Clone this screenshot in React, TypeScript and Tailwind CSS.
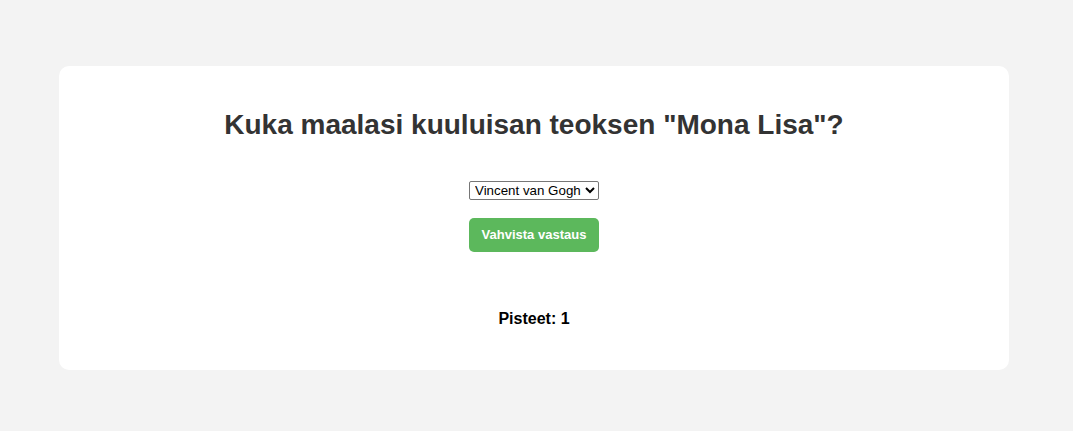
export default function App() {
  return (
    <div className="min-h-[431px] bg-[#f3f3f3] pt-[66px] pl-[59px] font-['Liberation_Sans',Arial,sans-serif]">
      <div className="w-[950px] h-[304px] bg-white rounded-[10px] flex flex-col items-center">
        <h1 className="mt-[43px] text-[28px] leading-[32px] font-bold text-[#333333]">
          Kuka maalasi kuuluisan teoksen "Mona Lisa"?
        </h1>
        <select
          defaultValue="Vincent van Gogh"
          className="mt-[40px] h-[19px] w-[130px] border border-[#767676] rounded-[2px] text-[13.33px] text-black bg-white px-[1px]"
        >
          <option>Leonardo da Vinci</option>
          <option>Pablo Picasso</option>
          <option>Vincent van Gogh</option>
        </select>
        <button className="mt-[18px] h-[34px] w-[130px] rounded-[5px] bg-[#5cb85c] text-white text-[13px] font-bold">
          Vahvista vastaus
        </button>
        <p className="mt-[58px] text-[16px] leading-[18px] font-bold text-black">Pisteet: 1</p>
      </div>
    </div>
  );
}
